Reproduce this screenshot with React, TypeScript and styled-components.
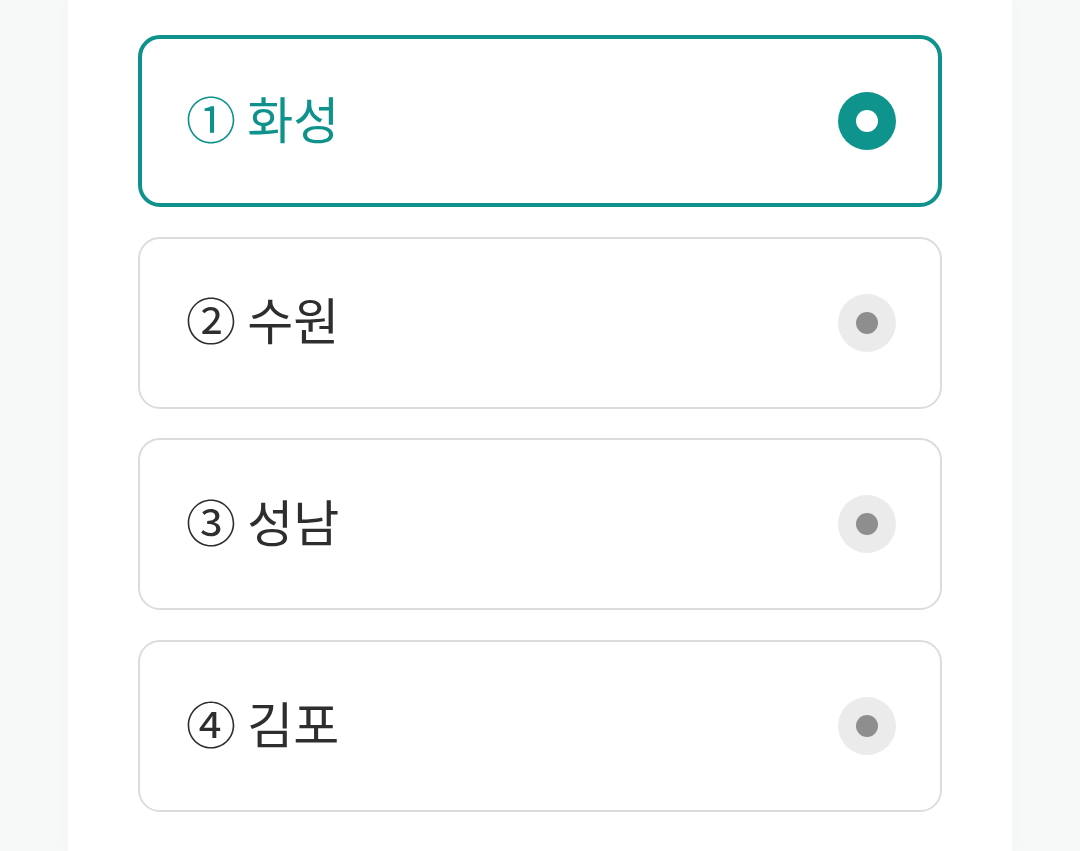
import React, { useState } from "react";
import styled, { createGlobalStyle } from "styled-components";

const Global = createGlobalStyle`
  html, body { margin: 0; padding: 0; background: #f7f9f8; }
  body { font-family: "Noto Sans CJK KR", "Noto Sans", sans-serif; }
`;

const Panel = styled.main`
  width: 944px;
  min-height: 851px;
  margin: 0 auto;
  background: #ffffff;
  box-shadow: 0 0 14px rgba(0, 0, 0, 0.025);
  box-sizing: border-box;
  padding: 35px 70px 0;
  display: flex;
  flex-direction: column;
  gap: 29.7px;
`;

const Option = styled.button<{ $selected: boolean }>`
  all: unset;
  box-sizing: border-box;
  height: 172px;
  border-radius: 22px;
  border: ${(p) => (p.$selected ? "4px solid #0e928b" : "2px solid #dcdcdc")};
  padding: 0 ${(p) => (p.$selected ? 42 : 44)}px 0 ${(p) => (p.$selected ? 44 : 46)}px;
  display: flex;
  align-items: center;
  justify-content: space-between;
  cursor: pointer;
  background: #fff;
`;

const Label = styled.span<{ $selected: boolean }>`
  font-family: "Noto Sans CJK KR", "Noto Sans", sans-serif;
  font-size: 50px;
  line-height: 1;
  margin-bottom: 9px;
  color: ${(p) => (p.$selected ? "#0e928b" : "#2e2e2e")};
  letter-spacing: 0;
`;

const Radio = styled.span<{ $selected: boolean }>`
  width: 58px;
  height: 58px;
  border-radius: 50%;
  background: ${(p) => (p.$selected ? "#0e948d" : "#ebebeb")};
  display: flex;
  align-items: center;
  justify-content: center;
  flex-shrink: 0;
  &::after {
    content: "";
    width: 22px;
    height: 22px;
    border-radius: 50%;
    background: ${(p) => (p.$selected ? "#ffffff" : "#8e8e8e")};
  }
`;

const options = ["① 화성", "② 수원", "③ 성남", "④ 김포"];

export default function App() {
  const [sel, setSel] = useState(0);
  return (
    <>
      <Global />
      <Panel>
        {options.map((o, i) => (
          <Option key={o} $selected={sel === i} onClick={() => setSel(i)}>
            <Label $selected={sel === i}>{o}</Label>
            <Radio $selected={sel === i} />
          </Option>
        ))}
      </Panel>
    </>
  );
}
